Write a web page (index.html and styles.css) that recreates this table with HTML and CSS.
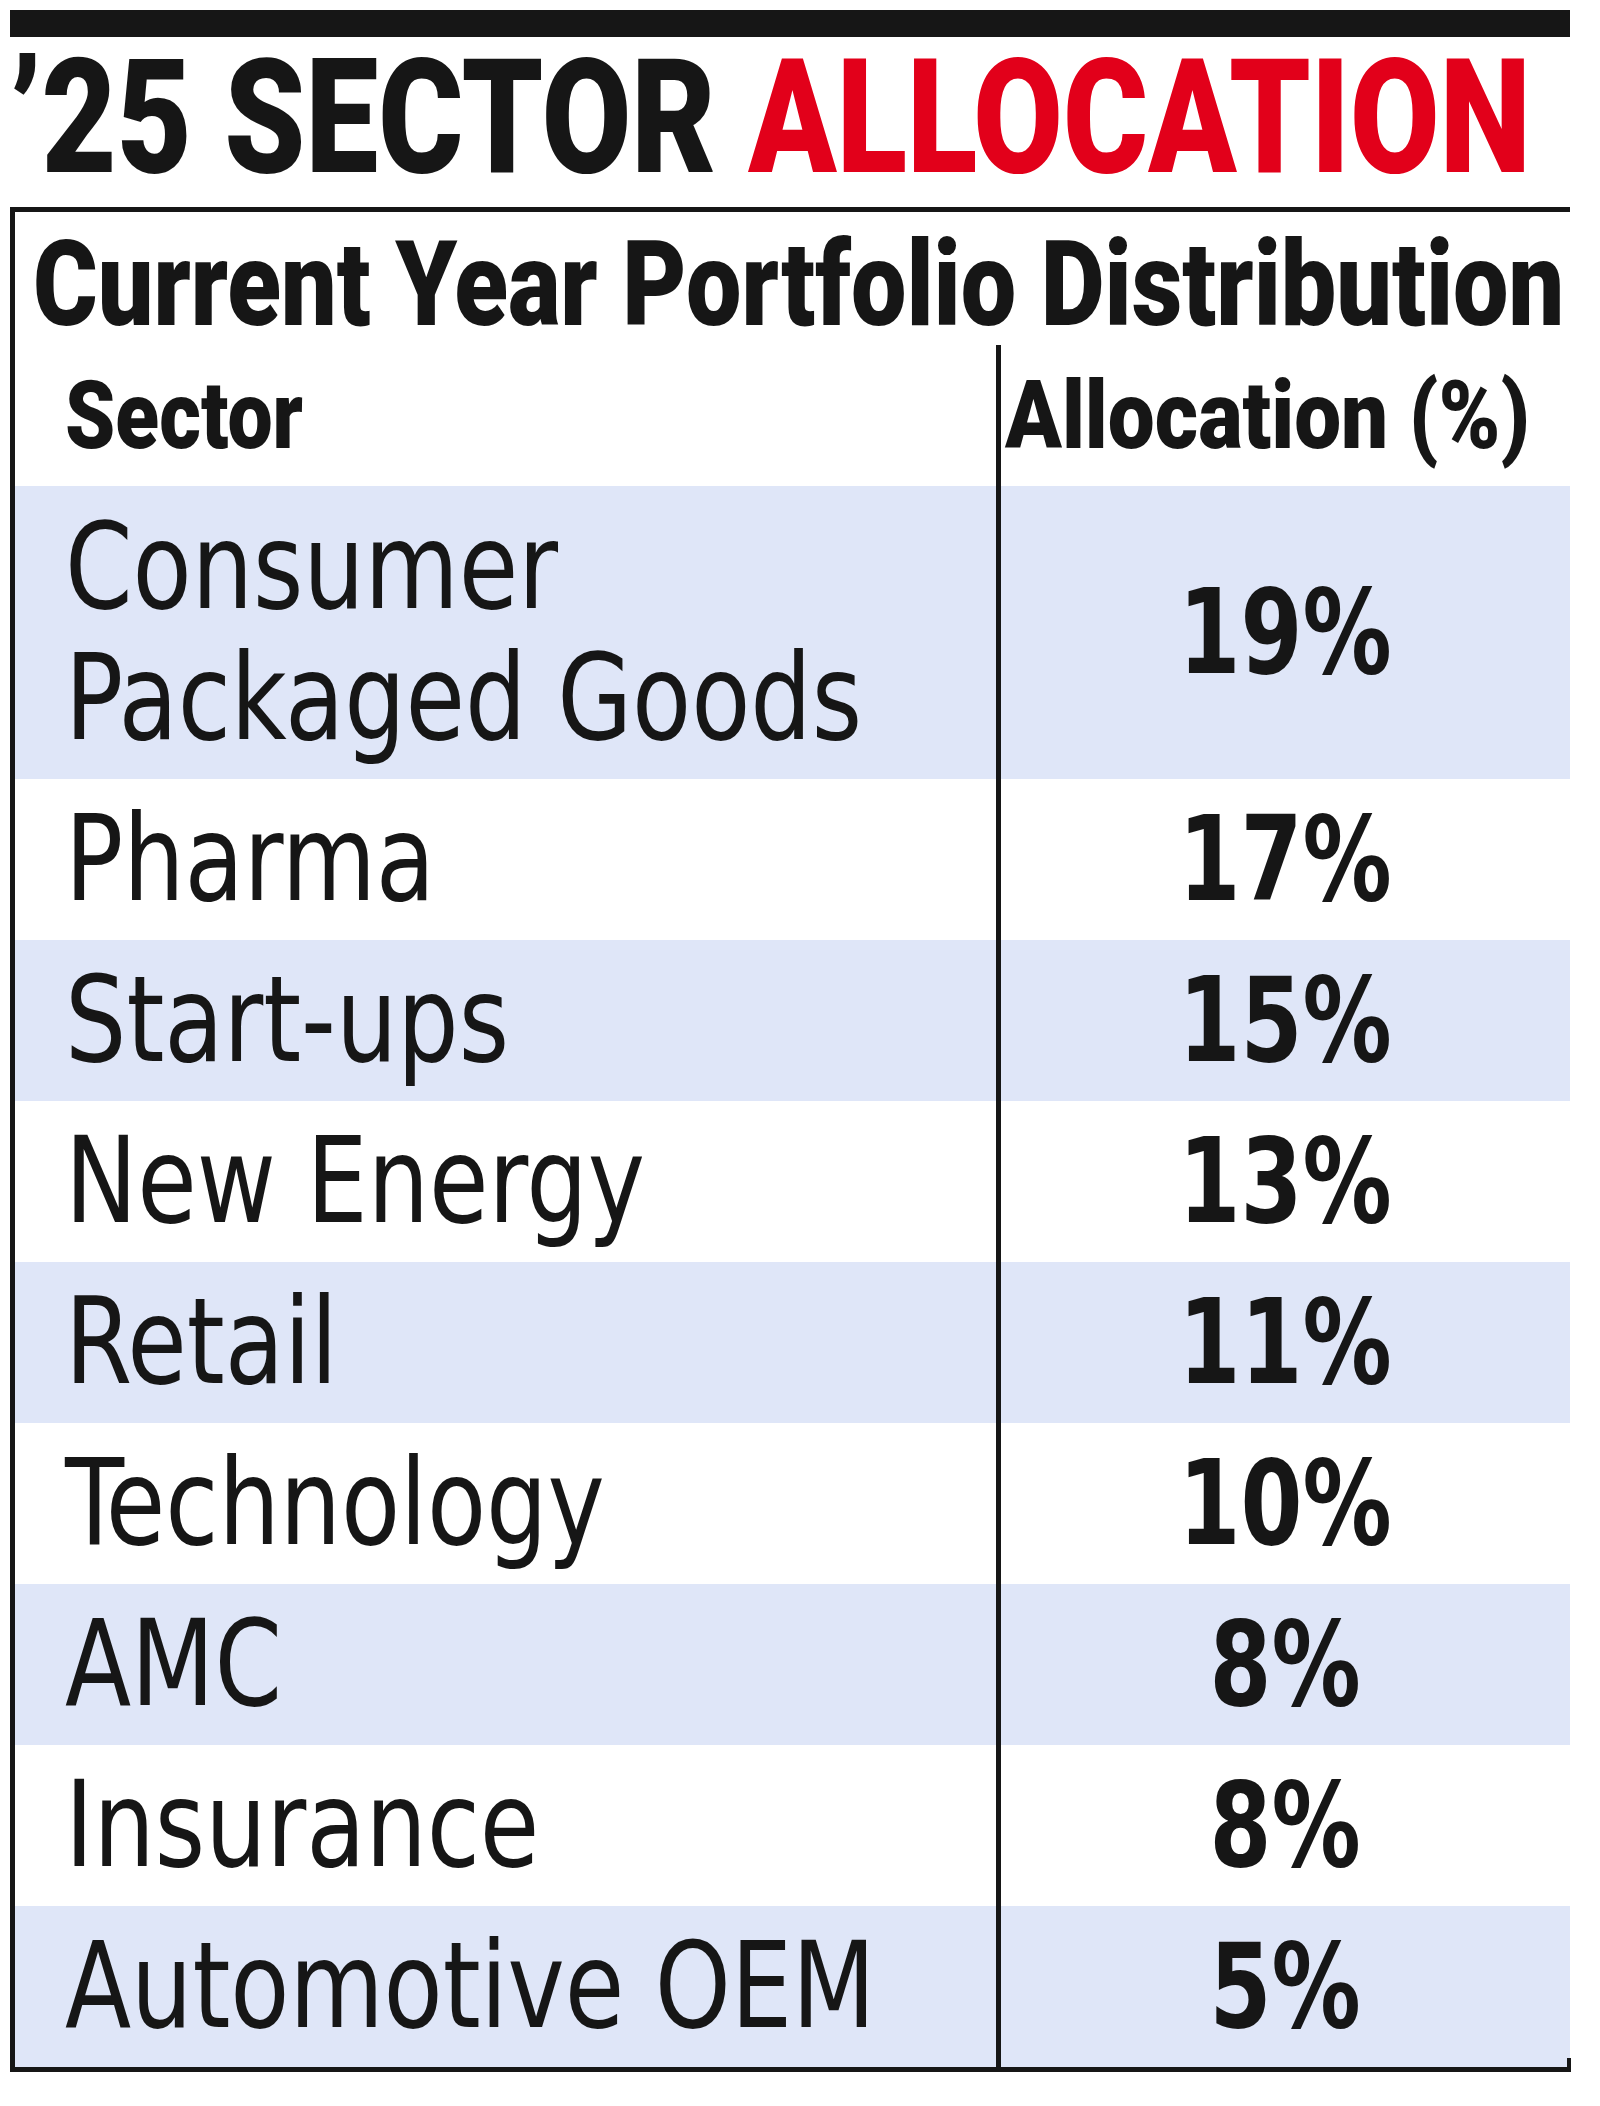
FILE: index.html
```html
<!DOCTYPE html>
<html lang="en">
<head>
<meta charset="utf-8">
<title>'25 Sector Allocation</title>
<link rel="stylesheet" href="styles.css">
</head>
<body>
<div class="page">
  <div class="topbar"></div>
  <h1 class="title"><span class="fit t1">’25 SECTOR <span class="red">ALLOCATION</span></span></h1>
  <div class="box">
    <h2 class="heading"><span class="fit t2">Current Year Portfolio Distribution</span></h2>
    <div class="table">
      <div class="row head">
        <div class="cell name"><span class="fit th1">Sector</span></div>
        <div class="cell pct"><span class="fit th2">Allocation (%)</span></div>
      </div>
      <div class="row band tall">
        <div class="cell name"><span class="fit sec">Consumer<br>Packaged Goods</span></div>
        <div class="cell pct"><span class="fit num">19%</span></div>
      </div>
      <div class="row">
        <div class="cell name"><span class="fit sec">Pharma</span></div>
        <div class="cell pct"><span class="fit num">17%</span></div>
      </div>
      <div class="row band">
        <div class="cell name"><span class="fit sec">Start-ups</span></div>
        <div class="cell pct"><span class="fit num">15%</span></div>
      </div>
      <div class="row">
        <div class="cell name"><span class="fit sec">New Energy</span></div>
        <div class="cell pct"><span class="fit num">13%</span></div>
      </div>
      <div class="row band">
        <div class="cell name"><span class="fit sec">Retail</span></div>
        <div class="cell pct"><span class="fit num">11%</span></div>
      </div>
      <div class="row">
        <div class="cell name"><span class="fit sec">Technology</span></div>
        <div class="cell pct"><span class="fit num">10%</span></div>
      </div>
      <div class="row band">
        <div class="cell name"><span class="fit sec">AMC</span></div>
        <div class="cell pct"><span class="fit num">8%</span></div>
      </div>
      <div class="row">
        <div class="cell name"><span class="fit sec">Insurance</span></div>
        <div class="cell pct"><span class="fit num">8%</span></div>
      </div>
      <div class="row band">
        <div class="cell name"><span class="fit sec">Automotive OEM</span></div>
        <div class="cell pct"><span class="fit num">5%</span></div>
      </div>
    </div>
  </div>
</div>
</body>
</html>
```

FILE: styles.css
```css
* { box-sizing: border-box; margin: 0; padding: 0; }
body { background: #fff; color: #161616; }

.page { width: 1600px; padding: 10px 30px 0 10px; }

.topbar { height: 27px; background: #161616; }

.fit { display: inline-block; white-space: nowrap; transform-origin: left center; }

/* Heavy condensed look: narrower font size, stretched vertically */
.title {
  font-family: Roboto, "Liberation Sans", sans-serif;
  font-weight: 900;
  font-size: 129.8px;
  line-height: 162px;
  height: 162px;
  white-space: nowrap;
  margin-bottom: 8px;
}
.t1 { transform: scale(1, 1.233); }
.red { color: #e2001a; }

.box {
  position: relative;
  border-top: 5px solid #161616;
  border-left: 5px solid #161616;
  border-bottom: 5px solid #161616;
}
.box::after {
  content: "";
  position: absolute;
  right: -1px;
  bottom: -5px;
  width: 4px;
  height: 14px;
  background: #161616;
}

.heading {
  font-family: Roboto, "Liberation Sans", sans-serif;
  font-weight: 900;
  font-size: 98.7px;
  line-height: 121px;
  height: 133px;
  padding: 12px 0 0 18px;
  white-space: nowrap;
}
.t2 { transform: scale(1, 1.195); }

.row { display: grid; grid-template-columns: 981px 1fr; height: 161px; }
.row.head { height: 141px; }
.row.tall { height: 293px; }
.band { background: #dfe6f8; }

.cell { display: flex; align-items: center; }
.cell.name { padding-left: 50px; }
.cell.pct { border-left: 5px solid #161616; justify-content: center; }
.head .cell.pct { justify-content: flex-start; padding-left: 4px; }

.th1, .th2 {
  font-family: Roboto, "Liberation Sans", sans-serif;
  font-weight: 900;
  line-height: 141px;
}
.th1 { font-size: 80.4px; transform: scale(1, 1.169); }
.th2 { font-size: 83.5px; transform: scale(1, 1.126); }

.sec {
  font-family: "DejaVu Sans", sans-serif;
  font-stretch: condensed;
  font-size: 119px;
  line-height: 131px;
  transform: scaleX(0.903);
}

.num {
  font-family: "DejaVu Sans", sans-serif;
  font-stretch: condensed;
  font-weight: 700;
  font-size: 118px;
  line-height: 131px;
  transform: scaleX(0.839);
  transform-origin: center center;
}
```
